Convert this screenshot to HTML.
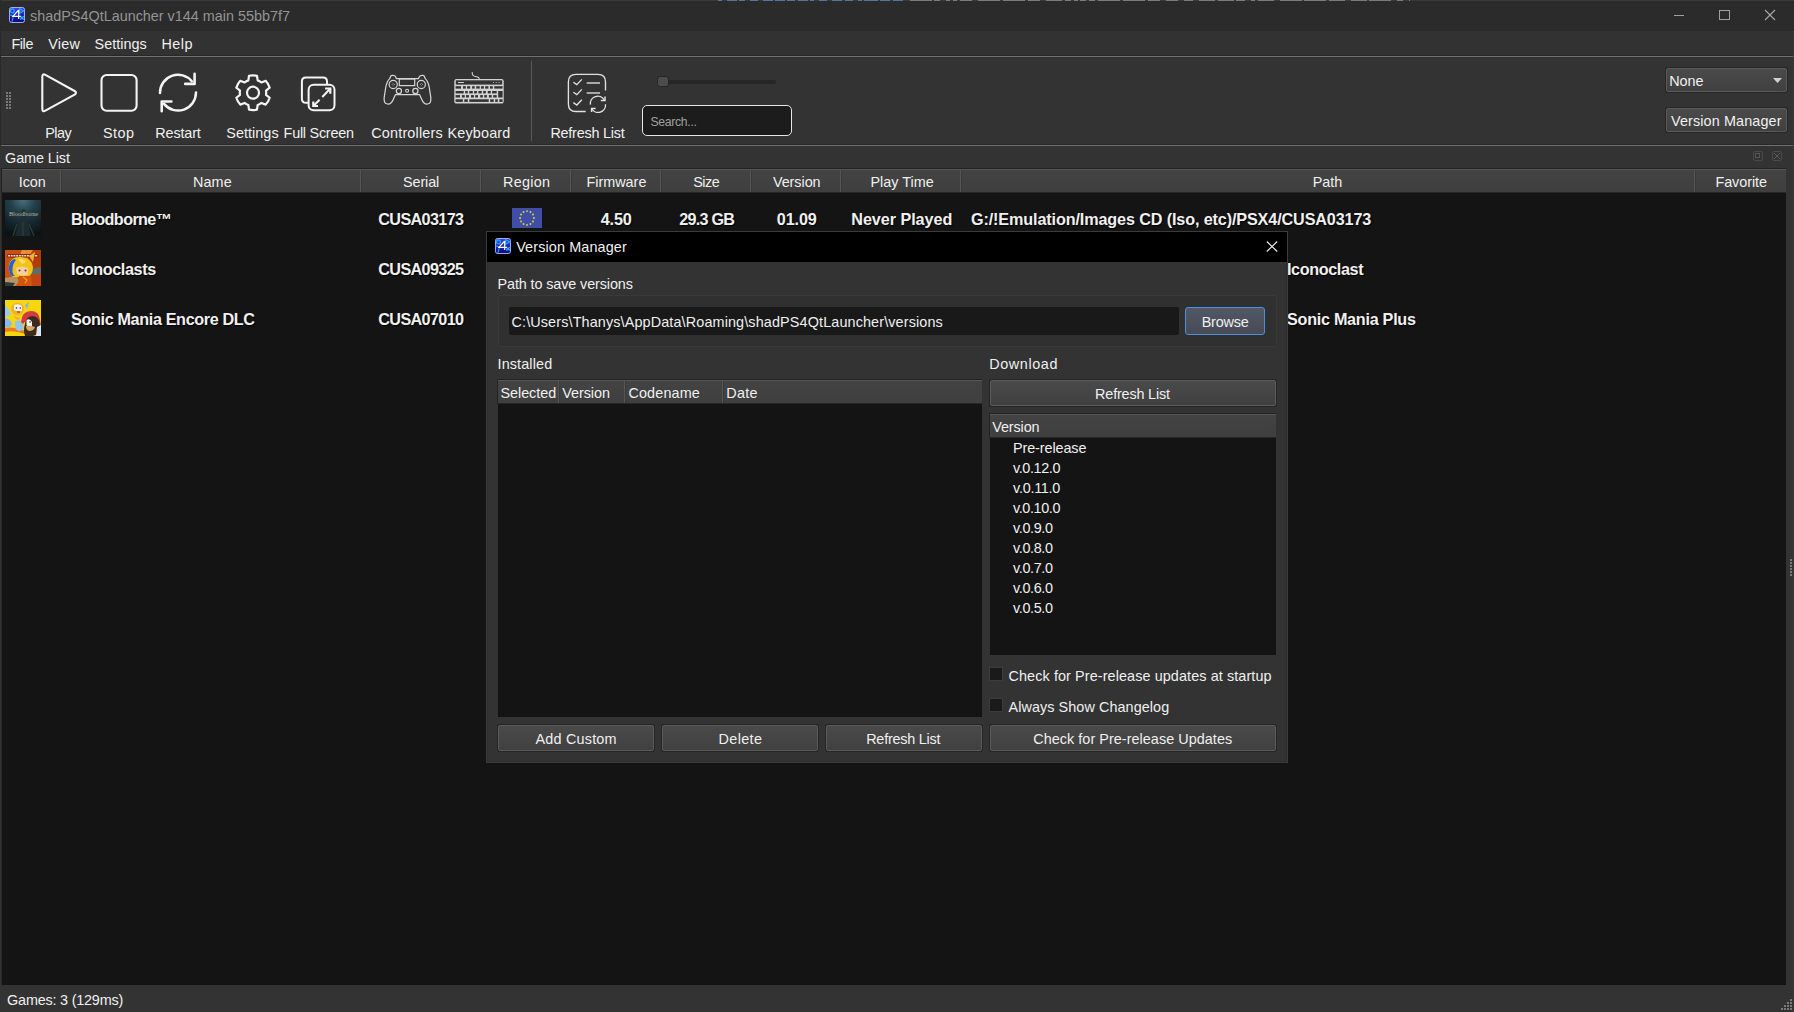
<!DOCTYPE html><html><head><meta charset="utf-8"><style>html,body{margin:0;padding:0;width:1794px;height:1012px;overflow:hidden;background:#333;}body{position:relative;font-family:"Liberation Sans", sans-serif;}.t{position:absolute;white-space:nowrap;line-height:20px;}.b{position:absolute;box-sizing:border-box;}</style></head><body>
<div class="b" style="left:0px;top:0px;width:1794px;height:31px;background:#2b2b2b;"></div>
<div class="b" style="left:0px;top:0px;width:1794px;height:1px;background:#3a3a3a;"></div>
<div class="b" style="left:718px;top:0px;width:4px;height:1px;background:#56749c;"></div>
<div class="b" style="left:727px;top:0px;width:10px;height:1px;background:#56749c;"></div>
<div class="b" style="left:739px;top:0px;width:6px;height:1px;background:#56749c;"></div>
<div class="b" style="left:750px;top:0px;width:8px;height:1px;background:#56749c;"></div>
<div class="b" style="left:763px;top:0px;width:10px;height:1px;background:#56749c;"></div>
<div class="b" style="left:775px;top:0px;width:10px;height:1px;background:#56749c;"></div>
<div class="b" style="left:787px;top:0px;width:8px;height:1px;background:#56749c;"></div>
<div class="b" style="left:798px;top:0px;width:10px;height:1px;background:#56749c;"></div>
<div class="b" style="left:810px;top:0px;width:4px;height:1px;background:#56749c;"></div>
<div class="b" style="left:819px;top:0px;width:8px;height:1px;background:#56749c;"></div>
<div class="b" style="left:832px;top:0px;width:10px;height:1px;background:#56749c;"></div>
<div class="b" style="left:845px;top:0px;width:8px;height:1px;background:#56749c;"></div>
<div class="b" style="left:858px;top:0px;width:4px;height:1px;background:#56749c;"></div>
<div class="b" style="left:864px;top:0px;width:14px;height:1px;background:#56749c;"></div>
<div class="b" style="left:880px;top:0px;width:10px;height:1px;background:#56749c;"></div>
<div class="b" style="left:893px;top:0px;width:10px;height:1px;background:#56749c;"></div>
<div class="b" style="left:910px;top:0px;width:22px;height:1px;background:#7c7c7c;"></div>
<div class="b" style="left:934px;top:0px;width:6px;height:1px;background:#7c7c7c;"></div>
<div class="b" style="left:946px;top:0px;width:4px;height:1px;background:#7c7c7c;"></div>
<div class="b" style="left:953px;top:0px;width:4px;height:1px;background:#7c7c7c;"></div>
<div class="b" style="left:960px;top:0px;width:12px;height:1px;background:#7c7c7c;"></div>
<div class="b" style="left:978px;top:0px;width:22px;height:1px;background:#7c7c7c;"></div>
<div class="b" style="left:1003px;top:0px;width:22px;height:1px;background:#7c7c7c;"></div>
<div class="b" style="left:1028px;top:0px;width:12px;height:1px;background:#7c7c7c;"></div>
<div class="b" style="left:1046px;top:0px;width:16px;height:1px;background:#7c7c7c;"></div>
<div class="b" style="left:1065px;top:0px;width:6px;height:1px;background:#7c7c7c;"></div>
<div class="b" style="left:1074px;top:0px;width:4px;height:1px;background:#7c7c7c;"></div>
<div class="b" style="left:1080px;top:0px;width:6px;height:1px;background:#7c7c7c;"></div>
<div class="b" style="left:1089px;top:0px;width:6px;height:1px;background:#7c7c7c;"></div>
<div class="b" style="left:1098px;top:0px;width:22px;height:1px;background:#7c7c7c;"></div>
<div class="b" style="left:1123px;top:0px;width:22px;height:1px;background:#7c7c7c;"></div>
<div class="b" style="left:1148px;top:0px;width:12px;height:1px;background:#7c7c7c;"></div>
<div class="b" style="left:1166px;top:0px;width:12px;height:1px;background:#7c7c7c;"></div>
<div class="b" style="left:1184px;top:0px;width:9px;height:1px;background:#7c7c7c;"></div>
<div class="b" style="left:1199px;top:0px;width:16px;height:1px;background:#7c7c7c;"></div>
<div class="b" style="left:1218px;top:0px;width:16px;height:1px;background:#7c7c7c;"></div>
<div class="b" style="left:1236px;top:0px;width:9px;height:1px;background:#7c7c7c;"></div>
<div class="b" style="left:1251px;top:0px;width:4px;height:1px;background:#7c7c7c;"></div>
<div class="b" style="left:1258px;top:0px;width:16px;height:1px;background:#7c7c7c;"></div>
<div class="b" style="left:1280px;top:0px;width:22px;height:1px;background:#7c7c7c;"></div>
<div class="b" style="left:1304px;top:0px;width:22px;height:1px;background:#7c7c7c;"></div>
<div class="b" style="left:1329px;top:0px;width:16px;height:1px;background:#7c7c7c;"></div>
<div class="b" style="left:1351px;top:0px;width:16px;height:1px;background:#7c7c7c;"></div>
<div class="b" style="left:1369px;top:0px;width:22px;height:1px;background:#7c7c7c;"></div>
<div class="b" style="left:1397px;top:0px;width:6px;height:1px;background:#7c7c7c;"></div>
<div class="b" style="left:1409px;top:0px;width:1px;height:1px;background:#7c7c7c;"></div>
<svg class="b" style="left:9px;top:7px" width="16" height="16" viewBox="0 0 16 16"><defs><linearGradient id="ag1" x1="0" y1="0" x2="0" y2="1"><stop offset="0" stop-color="#3a48e8"/><stop offset="0.6" stop-color="#1c1ab0"/><stop offset="1" stop-color="#0a0880"/></linearGradient></defs><rect x="0.5" y="0.5" width="15" height="15" rx="2" fill="url(#ag1)" stroke="#b8b8ff" stroke-width="0.9"/><circle cx="3.4" cy="3.9" r="1.9" fill="none" stroke="#22a8f8" stroke-width="1.3"/><path d="M10.6 1.5 L14.8 3.9 L10.6 6.4Z" fill="#3050e0" stroke="#22a8f8" stroke-width="1.1"/><path d="M11.3 9.2 L14.7 12.4 M14.7 9.2 L11.3 12.4" stroke="#18b8ff" stroke-width="1.4"/><path d="M0.6 7.9 L3.5 8.8 Q4.8 9.5 4 11 L2.8 14.8" fill="none" stroke="#20a8e0" stroke-width="1.1"/><path d="M9.7 3 L3.9 9.3 L11.8 9.3 M9.7 3 L9.7 12" fill="none" stroke="#fff" stroke-width="1.15" stroke-linejoin="miter"/></svg>
<div class="t" style="left:30.10px;top:6.01px;font-size:14.4px;color:#949494;letter-spacing:-0.006px;">shadPS4QtLauncher v144 main 55bb7f7</div>
<div class="b" style="left:1674px;top:15px;width:10px;height:1px;background:#a0a0a0;"></div>
<div class="b" style="left:1719px;top:10px;width:11px;height:10px;border:1px solid #a0a0a0;"></div>
<svg class="b" style="left:1764px;top:9px" width="12" height="12" viewBox="0 0 12 12"><path d="M1 1 L11 11 M11 1 L1 11" stroke="#a8a8a8" stroke-width="1.1"/></svg>
<div class="b" style="left:0px;top:31px;width:1794px;height:25px;background:#323232;"></div>
<div class="t" style="left:11.40px;top:34.01px;font-size:14.4px;color:#f0f0f0;letter-spacing:-0.395px;">File</div>
<div class="t" style="left:48.20px;top:34.01px;font-size:14.4px;color:#f0f0f0;letter-spacing:0.232px;">View</div>
<div class="t" style="left:94.50px;top:34.01px;font-size:14.4px;color:#f0f0f0;letter-spacing:0.045px;">Settings</div>
<div class="t" style="left:161.40px;top:34.01px;font-size:14.4px;color:#f0f0f0;letter-spacing:0.512px;">Help</div>
<div class="b" style="left:1px;top:55px;width:1792px;height:1px;background:#282828;"></div>
<div class="b" style="left:1px;top:56px;width:1792px;height:1px;background:#727272;"></div>
<div class="b" style="left:1px;top:57px;width:1792px;height:1px;background:#2e2e2e;"></div>
<div class="b" style="left:6px;top:92px;width:2px;height:2px;background:#7a7a7a;"></div>
<div class="b" style="left:9px;top:92px;width:2px;height:2px;background:#7a7a7a;"></div>
<div class="b" style="left:6px;top:95px;width:2px;height:2px;background:#7a7a7a;"></div>
<div class="b" style="left:9px;top:95px;width:2px;height:2px;background:#7a7a7a;"></div>
<div class="b" style="left:6px;top:98px;width:2px;height:2px;background:#7a7a7a;"></div>
<div class="b" style="left:9px;top:98px;width:2px;height:2px;background:#7a7a7a;"></div>
<div class="b" style="left:6px;top:101px;width:2px;height:2px;background:#7a7a7a;"></div>
<div class="b" style="left:9px;top:101px;width:2px;height:2px;background:#7a7a7a;"></div>
<div class="b" style="left:6px;top:104px;width:2px;height:2px;background:#7a7a7a;"></div>
<div class="b" style="left:9px;top:104px;width:2px;height:2px;background:#7a7a7a;"></div>
<div class="b" style="left:6px;top:107px;width:2px;height:2px;background:#7a7a7a;"></div>
<div class="b" style="left:9px;top:107px;width:2px;height:2px;background:#7a7a7a;"></div>
<svg class="b" style="left:38px;top:70px" width="44" height="46" viewBox="0 0 44 46"><path d="M4.3 6.8 Q4.3 3.2 7.4 4.9 L36.6 21 Q39.4 22.8 36.6 24.6 L7.4 40.7 Q4.3 42.4 4.3 38.8 Z" fill="none" stroke="#f4f4f4" stroke-width="2.1" stroke-linejoin="round"/></svg>
<svg class="b" style="left:98px;top:72px" width="42" height="42" viewBox="0 0 42 42"><rect x="3.5" y="3" width="35.1" height="35.7" rx="5.2" fill="none" stroke="#f4f4f4" stroke-width="2.1"/></svg>
<svg class="b" style="left:155px;top:70px" width="46" height="46" viewBox="0 0 46 46"><path d="M5 23 A18 18 0 0 1 36.8 11.2" fill="none" stroke="#f4f4f4" stroke-width="2.5" stroke-linecap="round"/><path d="M39.6 3.9 L39.6 13.9 L30.2 13.9" fill="none" stroke="#f4f4f4" stroke-width="2.6" stroke-linecap="round" stroke-linejoin="round"/><path d="M41 22.6 A18 18 0 0 1 9 33.9" fill="none" stroke="#f4f4f4" stroke-width="2.5" stroke-linecap="round"/><path d="M6.7 41.2 L6.7 31.5 L16.4 31.5" fill="none" stroke="#f4f4f4" stroke-width="2.6" stroke-linecap="round" stroke-linejoin="round"/></svg>
<svg class="b" style="left:232px;top:72px" width="42" height="42" viewBox="0 0 42 42"><path d="M16.35 8.35 L17.03 3.76 A17.4 17.4 0 0 1 24.97 3.76 L25.65 8.35 A13.2 13.2 0 0 1 29.37 10.50 L33.69 8.79 A17.4 17.4 0 0 1 37.66 15.66 L34.02 18.55 A13.2 13.2 0 0 1 34.02 22.85 L37.66 25.74 A17.4 17.4 0 0 1 33.69 32.61 L29.37 30.90 A13.2 13.2 0 0 1 25.65 33.05 L24.97 37.64 A17.4 17.4 0 0 1 17.03 37.64 L16.35 33.05 A13.2 13.2 0 0 1 12.63 30.90 L8.31 32.61 A17.4 17.4 0 0 1 4.34 25.74 L7.98 22.85 A13.2 13.2 0 0 1 7.98 18.55 L4.34 15.66 A17.4 17.4 0 0 1 8.31 8.79 L12.63 10.50 A13.2 13.2 0 0 1 16.35 8.35 Z" fill="none" stroke="#f4f4f4" stroke-width="2.2" stroke-linejoin="round"/><circle cx="21" cy="20.7" r="6" fill="none" stroke="#f4f4f4" stroke-width="2.2"/></svg>
<svg class="b" style="left:298px;top:74px" width="40" height="40" viewBox="0 0 40 40"><path d="M10.6 28.8 L8 28.8 Q3.9 28.8 3.9 24.7 L3.9 7.4 Q3.9 3.4 8 3.4 L25 3.4 Q29 3.4 29 7.4 L29 10.8" fill="none" stroke="#f4f4f4" stroke-width="2"/><rect x="10.6" y="10.8" width="25.9" height="25.4" rx="5" fill="none" stroke="#f4f4f4" stroke-width="2"/><path d="M15.3 32 L21.6 25.7 M24.3 23 L32.3 14.5" fill="none" stroke="#f4f4f4" stroke-width="2"/><path d="M32.3 19.7 L32.3 14.5 L27.1 14.5 M15.3 27.4 L15.3 32 L20 32" fill="none" stroke="#f4f4f4" stroke-width="2.2"/></svg>
<svg class="b" style="left:380px;top:72px" width="54" height="36" viewBox="0 0 54 36"><path d="M16.3 6.6 L38.4 6.6 L39.5 4.5 Q40 3.3 42 3.3 L43 3.3 Q44.5 3.5 44.8 5.5 L45.2 6.6 Q48 9 49.2 15 L50.8 25.5 Q51.5 31.8 47.5 32 Q44 32.5 42 28 L39.5 22.5 L15.5 22.5 L13 28 Q11 32.5 7.5 32 Q3.5 31.8 4.2 25.5 L5.8 15 Q7 9 9.8 6.6 L10.2 5.5 Q10.5 3.5 12 3.3 L13 3.3 Q15 3.3 15.5 4.5 Z" fill="none" stroke="#d6d6d6" stroke-width="1.25" stroke-linejoin="round"/><rect x="19.3" y="7" width="15.4" height="6.6" fill="none" stroke="#d6d6d6" stroke-width="1.2"/><circle cx="13.2" cy="12.5" r="4.1" fill="none" stroke="#d6d6d6" stroke-width="1.2"/><circle cx="41.3" cy="12.5" r="4.1" fill="none" stroke="#d6d6d6" stroke-width="1.2"/><circle cx="18.9" cy="19" r="2.6" fill="none" stroke="#d6d6d6" stroke-width="1.2"/><circle cx="35.4" cy="19" r="2.6" fill="none" stroke="#d6d6d6" stroke-width="1.2"/><circle cx="27.1" cy="18.8" r="1.5" fill="none" stroke="#d6d6d6" stroke-width="1.1"/><path d="M11.8 12.5 h0.6 M14.2 12.5 h0.6 M13.2 11.2 v0.6 M13.2 13.6 v0.6 M39.9 12.5 h0.6 M42.3 12.5 h0.6 M41.3 11.2 v0.6 M41.3 13.6 v0.6" stroke="#d6d6d6" stroke-width="0.9"/></svg>
<svg class="b" style="left:453px;top:70px" width="52" height="35" viewBox="0 0 52 35"><path d="M19.3 2.1 Q18.8 5.5 21.5 6.2 Q24 6.5 25.5 7.5 Q26.5 8.5 26.1 9.2" fill="none" stroke="#d2d2d2" stroke-width="1.1"/><rect x="1.3" y="9" width="49.4" height="24.6" rx="2.2" fill="#d2d2d2"/><rect x="2.8" y="10.3" width="46.4" height="4.3" fill="#333"/><path d="M5 12.5 H10.9" stroke="#d2d2d2" stroke-width="1"/><circle cx="40.4" cy="12.5" r="0.6" fill="#d2d2d2"/><circle cx="43.2" cy="12.5" r="0.6" fill="#d2d2d2"/><circle cx="46.1" cy="12.5" r="0.6" fill="#d2d2d2"/><rect x="2.6" y="16.2" width="5.4" height="2.4" fill="#333"/><rect x="10.0" y="16.2" width="2.8" height="2.4" fill="#333"/><rect x="14.1" y="16.2" width="3.1" height="2.4" fill="#333"/><rect x="19.1" y="16.2" width="2.6" height="2.4" fill="#333"/><rect x="23.3" y="16.2" width="3.4" height="2.4" fill="#333"/><rect x="28.0" y="16.2" width="2.9" height="2.4" fill="#333"/><rect x="32.2" y="16.2" width="3.2" height="2.4" fill="#333"/><rect x="37.0" y="16.2" width="2.8" height="2.4" fill="#333"/><rect x="41.3" y="16.2" width="8.3" height="2.4" fill="#333"/><rect x="2.6" y="21.0" width="8.1" height="2.4" fill="#333"/><rect x="12.2" y="21.0" width="2.6" height="2.4" fill="#333"/><rect x="16.3" y="21.0" width="3.5" height="2.4" fill="#333"/><rect x="21.1" y="21.0" width="2.8" height="2.4" fill="#333"/><rect x="25.4" y="21.0" width="3.3" height="2.4" fill="#333"/><rect x="30.2" y="21.0" width="2.6" height="2.4" fill="#333"/><rect x="34.8" y="21.0" width="3.0" height="2.4" fill="#333"/><rect x="39.1" y="21.0" width="4.6" height="2.4" fill="#333"/><rect x="2.6" y="25.1" width="4.4" height="2.4" fill="#333"/><rect x="8.9" y="25.1" width="2.8" height="2.4" fill="#333"/><rect x="13.0" y="25.1" width="2.9" height="2.4" fill="#333"/><rect x="18.0" y="25.1" width="2.9" height="2.4" fill="#333"/><rect x="22.2" y="25.1" width="2.8" height="2.4" fill="#333"/><rect x="27.2" y="25.1" width="2.6" height="2.4" fill="#333"/><rect x="31.3" y="25.1" width="2.6" height="2.4" fill="#333"/><rect x="35.9" y="25.1" width="2.8" height="2.4" fill="#333"/><rect x="40.2" y="25.1" width="3.5" height="2.4" fill="#333"/><rect x="2.6" y="29.3" width="7.2" height="2.6" fill="#333"/><rect x="11.3" y="29.3" width="3.5" height="2.6" fill="#333"/><rect x="16.3" y="29.3" width="19.4" height="2.6" fill="#333"/><rect x="37.2" y="29.3" width="3.5" height="2.6" fill="#333"/><rect x="42.2" y="29.3" width="2.6" height="2.6" fill="#333"/><rect x="46.3" y="29.3" width="3.3" height="2.6" fill="#333"/><rect x="45.2" y="21" width="4.4" height="6.5" fill="#333"/></svg>
<div class="b" style="left:531px;top:61px;width:1px;height:80px;background:#5a5a5a;"></div>
<svg class="b" style="left:565px;top:71px" width="44" height="44" viewBox="0 0 44 44"><path d="M20.7 40.5 L10.9 40.5 Q3.4 40.5 3.4 33 L3.4 10.8 Q3.4 3.3 10.9 3.3 L33 3.3 Q40.5 3.3 40.5 10.8 L40.5 19.5" fill="none" stroke="#e2e2e2" stroke-width="1.35"/><path d="M8.4 11.3 L11.8 13.6 L16.8 8.4 M8.4 21.3 L11.8 23.6 L16.8 18.4 M8.4 31.6 L11.8 34 L16.8 28.7" fill="none" stroke="#e2e2e2" stroke-width="1.35"/><path d="M21.7 12.1 H35 M21.7 22 H35" stroke="#a8a8a8" stroke-width="2"/><path d="M25.4 33.6 A7.4 7.4 0 0 1 39.2 29" fill="none" stroke="#e2e2e2" stroke-width="1.35"/><path d="M40 25.4 L40 29.4 L35.8 29.4" fill="none" stroke="#e2e2e2" stroke-width="1.5"/><path d="M40.5 33.3 A7.4 7.4 0 0 1 26.6 37.5" fill="none" stroke="#e2e2e2" stroke-width="1.35"/><path d="M26.6 41 L26.6 37.5 L30.6 37.5" fill="none" stroke="#e2e2e2" stroke-width="1.5"/></svg>
<div class="t" style="left:45.30px;top:122.51px;font-size:14.4px;color:#f0f0f0;letter-spacing:-0.527px;">Play</div>
<div class="t" style="left:103.00px;top:122.51px;font-size:14.4px;color:#f0f0f0;letter-spacing:0.445px;">Stop</div>
<div class="t" style="left:155.30px;top:122.51px;font-size:14.4px;color:#f0f0f0;letter-spacing:-0.135px;">Restart</div>
<div class="t" style="left:226.30px;top:122.51px;font-size:14.4px;color:#f0f0f0;letter-spacing:0.045px;">Settings</div>
<div class="t" style="left:283.60px;top:122.51px;font-size:14.4px;color:#f0f0f0;letter-spacing:-0.246px;">Full Screen</div>
<div class="t" style="left:371.30px;top:122.51px;font-size:14.4px;color:#f0f0f0;letter-spacing:0.175px;">Controllers</div>
<div class="t" style="left:447.40px;top:122.51px;font-size:14.4px;color:#f0f0f0;letter-spacing:0.195px;">Keyboard</div>
<div class="t" style="left:550.40px;top:122.51px;font-size:14.4px;color:#f0f0f0;letter-spacing:-0.227px;">Refresh List</div>
<div class="b" style="left:658px;top:80px;width:118px;height:4px;background:#262626;border-radius:2px;"></div>
<div class="b" style="left:657px;top:76px;width:12px;height:11px;background:#4c4c4c;border:1px solid #262626;border-radius:3px;"></div>
<div class="b" style="left:642px;top:105px;width:150px;height:31px;background:#1c1c1c;border:1.5px solid #e6e6e6;border-radius:5px;"></div>
<div class="t" style="left:650.40px;top:111.77px;font-size:12.2px;color:#a0a0a0;letter-spacing:-0.275px;">Search...</div>
<div class="b" style="left:1665px;top:67px;width:123px;height:26px;background:#262626;border-radius:3px;"></div>
<div class="b" style="left:1666px;top:68px;width:121px;height:24px;background:linear-gradient(#4a4a4a,#404040);border:1px solid #5a5a5a;border-radius:2px;"></div>
<div class="t" style="left:1669.20px;top:71.01px;font-size:14.4px;color:#f0f0f0;">None</div>
<svg class="b" style="left:1773px;top:78px" width="9" height="5" viewBox="0 0 9 5"><path d="M0 0 H9 L4.5 5 Z" fill="#d0d0d0"/></svg>
<div class="b" style="left:1665px;top:107px;width:123px;height:26px;background:#262626;border-radius:3px;"></div>
<div class="b" style="left:1666px;top:108px;width:121px;height:24px;background:linear-gradient(#4a4a4a,#404040);border:1px solid #5a5a5a;border-radius:2px;"></div>
<div class="t" style="left:1671.00px;top:111.01px;font-size:14.4px;color:#f0f0f0;letter-spacing:0.124px;">Version Manager</div>
<div class="b" style="left:1px;top:144px;width:1792px;height:1px;background:#282828;"></div>
<div class="b" style="left:1px;top:145px;width:1792px;height:1px;background:#6e6e6e;"></div>
<div class="t" style="left:5.10px;top:148.01px;font-size:14.4px;color:#f0f0f0;letter-spacing:-0.095px;">Game List</div>
<div class="b" style="left:1753px;top:151px;width:10px;height:10px;border:1px solid #4a4a4a;border-radius:2px;"></div>
<div class="b" style="left:1772px;top:151px;width:10px;height:10px;border:1px solid #4a4a4a;border-radius:2px;"></div>
<svg class="b" style="left:1773px;top:152px" width="8" height="8" viewBox="0 0 8 8"><path d="M1 1 L7 7 M7 1 L1 7" stroke="#5a5a5a" stroke-width="1"/></svg>
<div class="b" style="left:1755px;top:153px;width:5px;height:5px;border:1px solid #555;"></div>
<div class="b" style="left:2px;top:168px;width:1784px;height:817px;background:#141414;"></div>
<div class="b" style="left:1px;top:168px;width:1785px;height:1px;background:#232323;"></div>
<div class="b" style="left:1px;top:168px;width:1px;height:25px;background:#232323;"></div>
<div class="b" style="left:2px;top:169px;width:1784px;height:1px;background:#565656;"></div>
<div class="b" style="left:2px;top:170px;width:1784px;height:22px;background:linear-gradient(#434343,#3f3f3f);"></div>
<div class="b" style="left:2px;top:192px;width:1784px;height:1px;background:#262626;"></div>
<div class="b" style="left:60px;top:169px;width:1px;height:23px;background:#565656;"></div>
<div class="b" style="left:61px;top:170px;width:1px;height:22px;background:#393939;"></div>
<div class="b" style="left:360px;top:169px;width:1px;height:23px;background:#565656;"></div>
<div class="b" style="left:361px;top:170px;width:1px;height:22px;background:#393939;"></div>
<div class="b" style="left:480px;top:169px;width:1px;height:23px;background:#565656;"></div>
<div class="b" style="left:481px;top:170px;width:1px;height:22px;background:#393939;"></div>
<div class="b" style="left:570px;top:169px;width:1px;height:23px;background:#565656;"></div>
<div class="b" style="left:571px;top:170px;width:1px;height:22px;background:#393939;"></div>
<div class="b" style="left:660px;top:169px;width:1px;height:23px;background:#565656;"></div>
<div class="b" style="left:661px;top:170px;width:1px;height:22px;background:#393939;"></div>
<div class="b" style="left:750px;top:169px;width:1px;height:23px;background:#565656;"></div>
<div class="b" style="left:751px;top:170px;width:1px;height:22px;background:#393939;"></div>
<div class="b" style="left:840px;top:169px;width:1px;height:23px;background:#565656;"></div>
<div class="b" style="left:841px;top:170px;width:1px;height:22px;background:#393939;"></div>
<div class="b" style="left:960px;top:169px;width:1px;height:23px;background:#565656;"></div>
<div class="b" style="left:961px;top:170px;width:1px;height:22px;background:#393939;"></div>
<div class="b" style="left:1694px;top:169px;width:1px;height:23px;background:#565656;"></div>
<div class="b" style="left:1695px;top:170px;width:1px;height:22px;background:#393939;"></div>
<div class="t" style="left:18.70px;top:172.01px;font-size:14.4px;color:#f0f0f0;letter-spacing:-0.005px;">Icon</div>
<div class="t" style="left:193.00px;top:172.01px;font-size:14.4px;color:#f0f0f0;letter-spacing:0.084px;">Name</div>
<div class="t" style="left:403.00px;top:172.01px;font-size:14.4px;color:#f0f0f0;letter-spacing:-0.113px;">Serial</div>
<div class="t" style="left:503.10px;top:172.01px;font-size:14.4px;color:#f0f0f0;letter-spacing:0.250px;">Region</div>
<div class="t" style="left:586.40px;top:172.01px;font-size:14.4px;color:#f0f0f0;letter-spacing:0.007px;">Firmware</div>
<div class="t" style="left:693.30px;top:172.01px;font-size:14.4px;color:#f0f0f0;letter-spacing:-0.527px;">Size</div>
<div class="t" style="left:772.90px;top:172.01px;font-size:14.4px;color:#f0f0f0;letter-spacing:-0.049px;">Version</div>
<div class="t" style="left:870.40px;top:172.01px;font-size:14.4px;color:#f0f0f0;letter-spacing:0.035px;">Play Time</div>
<div class="t" style="left:961px;width:733px;text-align:center;top:172.01px;font-size:14.4px;color:#f0f0f0;">Path</div>
<div class="t" style="left:1715.40px;top:172.01px;font-size:14.4px;color:#f0f0f0;letter-spacing:-0.055px;">Favorite</div>
<div class="t" style="left:71.10px;top:208.99px;font-size:16.2px;color:#f0f0f0;font-weight:bold;letter-spacing:-0.618px;text-shadow:1px 1px 1px #000;">Bloodborne™</div>
<div class="t" style="left:378.30px;top:208.99px;font-size:16.2px;color:#f0f0f0;font-weight:bold;letter-spacing:-0.635px;text-shadow:1px 1px 1px #000;">CUSA03173</div>
<div class="t" style="left:71.10px;top:258.99px;font-size:16.2px;color:#f0f0f0;font-weight:bold;letter-spacing:-0.400px;text-shadow:1px 1px 1px #000;">Iconoclasts</div>
<div class="t" style="left:378.30px;top:258.99px;font-size:16.2px;color:#f0f0f0;font-weight:bold;letter-spacing:-0.635px;text-shadow:1px 1px 1px #000;">CUSA09325</div>
<div class="t" style="left:71.10px;top:308.99px;font-size:16.2px;color:#f0f0f0;font-weight:bold;letter-spacing:-0.364px;text-shadow:1px 1px 1px #000;">Sonic Mania Encore DLC</div>
<div class="t" style="left:378.30px;top:308.99px;font-size:16.2px;color:#f0f0f0;font-weight:bold;letter-spacing:-0.635px;text-shadow:1px 1px 1px #000;">CUSA07010</div>
<div class="t" style="left:600.70px;top:208.99px;font-size:16.2px;color:#f0f0f0;font-weight:bold;letter-spacing:-0.130px;text-shadow:1px 1px 1px #000;">4.50</div>
<div class="t" style="left:679.30px;top:208.99px;font-size:16.2px;color:#f0f0f0;font-weight:bold;letter-spacing:-0.777px;text-shadow:1px 1px 1px #000;">29.3 GB</div>
<div class="t" style="left:776.80px;top:208.99px;font-size:16.2px;color:#f0f0f0;font-weight:bold;letter-spacing:-0.125px;text-shadow:1px 1px 1px #000;">01.09</div>
<div class="t" style="left:851.30px;top:208.99px;font-size:16.2px;color:#f0f0f0;font-weight:bold;letter-spacing:-0.058px;text-shadow:1px 1px 1px #000;">Never Played</div>
<div class="t" style="left:971.00px;top:208.99px;font-size:16.2px;color:#f0f0f0;font-weight:bold;letter-spacing:-0.130px;text-shadow:1px 1px 1px #000;">G:/!Emulation/Images CD (Iso, etc)/PSX4/CUSA03173</div>
<div class="t" style="left:1287.00px;top:258.99px;font-size:16.2px;color:#f0f0f0;font-weight:bold;letter-spacing:-0.388px;text-shadow:1px 1px 1px #000;">Iconoclast</div>
<div class="t" style="left:1287.00px;top:308.99px;font-size:16.2px;color:#f0f0f0;font-weight:bold;letter-spacing:-0.278px;text-shadow:1px 1px 1px #000;">Sonic Mania Plus</div>
<svg class="b" style="left:512px;top:208px" width="30" height="20" viewBox="0 0 30 20"><rect width="30" height="20" fill="#3f4ea6"/><circle cx="21.90" cy="10.00" r="0.95" fill="#e8d030"/><circle cx="20.98" cy="13.45" r="0.95" fill="#e8d030"/><circle cx="18.45" cy="15.98" r="0.95" fill="#e8d030"/><circle cx="15.00" cy="16.90" r="0.95" fill="#e8d030"/><circle cx="11.55" cy="15.98" r="0.95" fill="#e8d030"/><circle cx="9.02" cy="13.45" r="0.95" fill="#e8d030"/><circle cx="8.10" cy="10.00" r="0.95" fill="#e8d030"/><circle cx="9.02" cy="6.55" r="0.95" fill="#e8d030"/><circle cx="11.55" cy="4.02" r="0.95" fill="#e8d030"/><circle cx="15.00" cy="3.10" r="0.95" fill="#e8d030"/><circle cx="18.45" cy="4.02" r="0.95" fill="#e8d030"/><circle cx="20.98" cy="6.55" r="0.95" fill="#e8d030"/></svg>
<svg class="b" style="left:5px;top:200px" width="36" height="36" viewBox="0 0 36 36"><defs><radialGradient id="bb" cx="0.5" cy="0" r="1"><stop offset="0" stop-color="#4a6e7c"/><stop offset="0.35" stop-color="#23404a"/><stop offset="0.75" stop-color="#132228"/><stop offset="1" stop-color="#0b1316"/></radialGradient></defs><rect width="36" height="36" fill="url(#bb)"/><path d="M17 9 L19.5 9 L22 20 L26 36 L10 36 L15 20 Z" fill="#1e3034" opacity="0.8"/><path d="M12 24 L8 36 M24 24 L29 36 M18 22 L18 36" stroke="#2c3e3c" stroke-width="1.2"/><text x="18.5" y="16.3" font-family="Liberation Serif" font-size="6.6" fill="#bdb59a" text-anchor="middle" textLength="29" lengthAdjust="spacingAndGlyphs">Bloodborne</text></svg>
<svg class="b" style="left:5px;top:250px" width="36" height="36" viewBox="0 0 36 36"><rect width="36" height="36" fill="#c9500f"/><path d="M20 0 L36 0 L36 18 L28 20 Z" fill="#b53c08"/><path d="M17 0 L28 0 L22 10 L14 8Z" fill="#f0a040" opacity="0.8"/><path d="M0 28 L12 26 L14 32 L10 36 L0 36Z" fill="#b49466"/><path d="M0 32 L10 33 L8 36 L0 36Z" fill="#2f3a3a"/><path d="M23 19 L36 17 L36 24 L26 26Z" fill="#5f6c66"/><path d="M22 25 L36 24 L36 36 L22 36Z" fill="#c24410"/><rect x="2.3" y="4" width="31" height="3.6" fill="#8a2a14"/><path d="M3 5.8 H33" stroke="#f2d8c8" stroke-width="1.6" stroke-dasharray="2 0.7"/><path d="M4 15 Q6 6 16 7 Q27 8 28 17 Q28 25 22 27 L8 27 Q3 23 4 15Z" fill="#f2c414"/><path d="M13 9 Q18 8 21 12 L17 14Z" fill="#f8e070"/><path d="M24 6 L30 2 L28 12Z" fill="#f0b030"/><path d="M4 20 Q3 12 9 9 L11 10 Q7 14 7.5 22 Q8 25 10 26 L7 26 Q4.5 24 4 20Z" fill="#2060e0"/><path d="M11 18 Q17 15 23 18 L23 24 Q18 27 12 24Z" fill="#f2d0a4"/><circle cx="14.5" cy="20.5" r="1" fill="#a02020"/><circle cx="20.5" cy="20.5" r="1" fill="#a02020"/><path d="M14 26 L26 26 L27 36 L13 36Z" fill="#d4540e"/><path d="M18 27 L22 30 L20 33" stroke="#f0a020" stroke-width="1.2" fill="none"/></svg>
<svg class="b" style="left:5px;top:300px" width="36" height="36" viewBox="0 0 36 36"><rect width="36" height="36" fill="#f7d60e"/><path d="M0 28 Q10 26 20 31 L20 34 Q10 30 0 32Z" fill="#f07a20"/><path d="M0 6 Q4 8 6 14 L2 17 L0 16Z" fill="#9cc8f0"/><path d="M0 18 Q6 19 7 24 L4 28 L0 27Z" fill="#8ab8ee"/><path d="M10 21 Q16 19 18 24 Q20 30 15 31 Q11 31 10 27Z" fill="#94c4f2"/><path d="M20 5 L24 2 L22 9 Z" fill="#80b0e8"/><circle cx="12.5" cy="9" r="6.5" fill="#f0b428"/><path d="M9 5 Q13 3 17 6 L17 11 Q13 12 9 10Z" fill="#f8f4ec"/><circle cx="11.5" cy="8" r="0.8" fill="#222"/><circle cx="15.3" cy="8" r="0.8" fill="#222"/><path d="M12 12 H15" stroke="#a02020" stroke-width="1.1"/><path d="M9 15 Q12 19 15 17 L14 20 Q10 20 9 15Z" fill="#e8a850"/><path d="M16 22 Q17 11 26 11 Q34 11 35 20 L36 26 L30 24 Q24 16 18 24Z" fill="#d23a44"/><path d="M20 24 Q21 16 28 16 Q35 17 35 26 Q35 34 28 36 L20 36 Q18 30 20 24Z" fill="#3c2a1e"/><path d="M21.5 20 Q25 18 27 22 L27 27 Q23 28 21.5 25Z" fill="#f6f2ea"/><circle cx="25" cy="22" r="0.8" fill="#222"/><path d="M21 26 Q25 25 30 27 Q29 31 24 31 Q21 30 21 26Z" fill="#d8a868"/><path d="M32 27 L36 25 L36 36 L31 36Z" fill="#dce8f8"/></svg>
<div class="b" style="left:1790px;top:559px;width:2px;height:2px;background:#7a7a7a;"></div>
<div class="b" style="left:1790px;top:562px;width:2px;height:2px;background:#7a7a7a;"></div>
<div class="b" style="left:1790px;top:565px;width:2px;height:2px;background:#7a7a7a;"></div>
<div class="b" style="left:1790px;top:568px;width:2px;height:2px;background:#7a7a7a;"></div>
<div class="b" style="left:1790px;top:571px;width:2px;height:2px;background:#7a7a7a;"></div>
<div class="b" style="left:1790px;top:574px;width:2px;height:2px;background:#7a7a7a;"></div>
<div class="b" style="left:0px;top:985px;width:1794px;height:27px;background:#333;"></div>
<div class="t" style="left:7.10px;top:990.01px;font-size:14.4px;color:#f0f0f0;letter-spacing:-0.202px;">Games: 3 (129ms)</div>
<div class="b" style="left:1790px;top:999px;width:2px;height:2px;background:#7a7a7a;"></div>
<div class="b" style="left:1787px;top:1002px;width:2px;height:2px;background:#7a7a7a;"></div>
<div class="b" style="left:1790px;top:1002px;width:2px;height:2px;background:#7a7a7a;"></div>
<div class="b" style="left:1784px;top:1005px;width:2px;height:2px;background:#7a7a7a;"></div>
<div class="b" style="left:1787px;top:1005px;width:2px;height:2px;background:#7a7a7a;"></div>
<div class="b" style="left:1790px;top:1005px;width:2px;height:2px;background:#7a7a7a;"></div>
<div class="b" style="left:1781px;top:1008px;width:2px;height:2px;background:#7a7a7a;"></div>
<div class="b" style="left:1784px;top:1008px;width:2px;height:2px;background:#7a7a7a;"></div>
<div class="b" style="left:1787px;top:1008px;width:2px;height:2px;background:#7a7a7a;"></div>
<div class="b" style="left:1790px;top:1008px;width:2px;height:2px;background:#7a7a7a;"></div>
<div class="b" style="left:0px;top:0px;width:1px;height:146px;background:#2a2a2a;"></div>
<div class="b" style="left:0px;top:146px;width:1px;height:866px;background:#333;"></div>
<div class="b" style="left:1px;top:193px;width:1px;height:792px;background:#2a2a2a;"></div>
<div class="b" style="left:1793px;top:31px;width:1px;height:981px;background:#3a3a3a;"></div>
<div class="b" style="left:486px;top:231px;width:802px;height:532px;background:#333;border:1px solid #3b3b3b;"></div>
<div class="b" style="left:487px;top:262px;width:800px;height:500px;border:1px solid #2e2e2e;border-top:none;"></div>
<div class="b" style="left:487px;top:232px;width:800px;height:30px;background:#000;"></div>
<svg class="b" style="left:495px;top:238px" width="16" height="16" viewBox="0 0 16 16"><defs><linearGradient id="ag2" x1="0" y1="0" x2="0" y2="1"><stop offset="0" stop-color="#3a48e8"/><stop offset="0.6" stop-color="#1c1ab0"/><stop offset="1" stop-color="#0a0880"/></linearGradient></defs><rect x="0.5" y="0.5" width="15" height="15" rx="2" fill="url(#ag2)" stroke="#b8b8ff" stroke-width="0.9"/><circle cx="3.4" cy="3.9" r="1.9" fill="none" stroke="#22a8f8" stroke-width="1.3"/><path d="M10.6 1.5 L14.8 3.9 L10.6 6.4Z" fill="#3050e0" stroke="#22a8f8" stroke-width="1.1"/><path d="M11.3 9.2 L14.7 12.4 M14.7 9.2 L11.3 12.4" stroke="#18b8ff" stroke-width="1.4"/><path d="M0.6 7.9 L3.5 8.8 Q4.8 9.5 4 11 L2.8 14.8" fill="none" stroke="#20a8e0" stroke-width="1.1"/><path d="M9.7 3 L3.9 9.3 L11.8 9.3 M9.7 3 L9.7 12" fill="none" stroke="#fff" stroke-width="1.15" stroke-linejoin="miter"/></svg>
<div class="t" style="left:516.20px;top:237.01px;font-size:14.4px;color:#f0f0f0;letter-spacing:0.124px;">Version Manager</div>
<svg class="b" style="left:1266px;top:241px" width="12" height="11" viewBox="0 0 12 11"><path d="M0.8 0.5 L11.2 10.5 M11.2 0.5 L0.8 10.5" stroke="#f0f0f0" stroke-width="1.1"/></svg>
<div class="t" style="left:497.50px;top:273.51px;font-size:14.4px;color:#f0f0f0;letter-spacing:-0.108px;">Path to save versions</div>
<div class="b" style="left:498px;top:295px;width:779px;height:52px;background:#303030;border:1px solid #393939;border-radius:2px;"></div>
<div class="b" style="left:509px;top:307px;width:670px;height:28px;background:#191919;border-radius:2px;"></div>
<div class="t" style="left:511.50px;top:312.01px;font-size:14.4px;color:#f0f0f0;letter-spacing:0.129px;">C:\Users\Thanys\AppData\Roaming\shadPS4QtLauncher\versions</div>
<div class="b" style="left:1185px;top:307px;width:80px;height:28px;background:linear-gradient(#525866,#464b57);border:1px solid #4a90dc;border-radius:3px;"></div>
<div class="t" style="left:1201.70px;top:312.01px;font-size:14.4px;color:#f0f0f0;letter-spacing:-0.190px;">Browse</div>
<div class="t" style="left:497.50px;top:354.01px;font-size:14.4px;color:#f0f0f0;letter-spacing:0.129px;">Installed</div>
<div class="b" style="left:498px;top:380px;width:484px;height:337px;background:#141414;"></div>
<div class="b" style="left:497px;top:379px;width:485px;height:1px;background:#232323;"></div>
<div class="b" style="left:497px;top:379px;width:1px;height:25px;background:#232323;"></div>
<div class="b" style="left:498px;top:380px;width:484px;height:1px;background:#565656;"></div>
<div class="b" style="left:498px;top:381px;width:484px;height:22px;background:linear-gradient(#434343,#3f3f3f);"></div>
<div class="b" style="left:498px;top:403px;width:484px;height:1px;background:#262626;"></div>
<div class="b" style="left:558px;top:380px;width:1px;height:23px;background:#565656;"></div>
<div class="b" style="left:559px;top:381px;width:1px;height:22px;background:#393939;"></div>
<div class="b" style="left:624px;top:380px;width:1px;height:23px;background:#565656;"></div>
<div class="b" style="left:625px;top:381px;width:1px;height:22px;background:#393939;"></div>
<div class="b" style="left:722px;top:380px;width:1px;height:23px;background:#565656;"></div>
<div class="b" style="left:723px;top:381px;width:1px;height:22px;background:#393939;"></div>
<div class="t" style="left:500.40px;top:382.61px;font-size:14.4px;color:#f0f0f0;letter-spacing:-0.017px;">Selected</div>
<div class="t" style="left:562.30px;top:382.61px;font-size:14.4px;color:#f0f0f0;letter-spacing:-0.066px;">Version</div>
<div class="t" style="left:628.40px;top:382.61px;font-size:14.4px;color:#f0f0f0;letter-spacing:0.155px;">Codename</div>
<div class="t" style="left:726.30px;top:382.61px;font-size:14.4px;color:#f0f0f0;letter-spacing:0.272px;">Date</div>
<div class="t" style="left:989.30px;top:354.01px;font-size:14.4px;color:#f0f0f0;letter-spacing:0.589px;">Download</div>
<div class="b" style="left:989px;top:379px;width:288px;height:28px;background:#262626;border-radius:3px;"></div>
<div class="b" style="left:990px;top:380px;width:286px;height:26px;background:linear-gradient(#4a4a4a,#404040);border:1px solid #5a5a5a;border-radius:2px;"></div>
<div class="t" style="left:1095.10px;top:384.01px;font-size:14.4px;color:#f0f0f0;letter-spacing:-0.172px;">Refresh List</div>
<div class="b" style="left:990px;top:414px;width:286px;height:241px;background:#141414;"></div>
<div class="b" style="left:989px;top:413px;width:287px;height:1px;background:#232323;"></div>
<div class="b" style="left:989px;top:413px;width:1px;height:25px;background:#232323;"></div>
<div class="b" style="left:990px;top:414px;width:286px;height:1px;background:#565656;"></div>
<div class="b" style="left:990px;top:415px;width:286px;height:22px;background:linear-gradient(#434343,#3f3f3f);"></div>
<div class="b" style="left:990px;top:437px;width:286px;height:1px;background:#262626;"></div>
<div class="t" style="left:992.20px;top:417.01px;font-size:14.4px;color:#f0f0f0;letter-spacing:-0.099px;">Version</div>
<div class="t" style="left:1013.00px;top:438.01px;font-size:14.4px;color:#f0f0f0;letter-spacing:-0.095px;">Pre-release</div>
<div class="t" style="left:1013.00px;top:458.01px;font-size:14.4px;color:#f0f0f0;letter-spacing:-0.387px;">v.0.12.0</div>
<div class="t" style="left:1013.00px;top:478.01px;font-size:14.4px;color:#f0f0f0;letter-spacing:-0.243px;">v.0.11.0</div>
<div class="t" style="left:1013.00px;top:498.01px;font-size:14.4px;color:#f0f0f0;letter-spacing:-0.387px;">v.0.10.0</div>
<div class="t" style="left:1013.00px;top:518.01px;font-size:14.4px;color:#f0f0f0;letter-spacing:-0.365px;">v.0.9.0</div>
<div class="t" style="left:1013.00px;top:538.01px;font-size:14.4px;color:#f0f0f0;letter-spacing:-0.365px;">v.0.8.0</div>
<div class="t" style="left:1013.00px;top:558.01px;font-size:14.4px;color:#f0f0f0;letter-spacing:-0.365px;">v.0.7.0</div>
<div class="t" style="left:1013.00px;top:578.01px;font-size:14.4px;color:#f0f0f0;letter-spacing:-0.365px;">v.0.6.0</div>
<div class="t" style="left:1013.00px;top:598.01px;font-size:14.4px;color:#f0f0f0;letter-spacing:-0.365px;">v.0.5.0</div>
<div class="b" style="left:989px;top:667px;width:14px;height:14px;background:#1a1a1a;border:1px solid #3c3c3c;"></div>
<div class="t" style="left:1008.50px;top:666.01px;font-size:14.4px;color:#f0f0f0;letter-spacing:0.099px;">Check for Pre-release updates at startup</div>
<div class="b" style="left:989px;top:698px;width:14px;height:14px;background:#1a1a1a;border:1px solid #3c3c3c;"></div>
<div class="t" style="left:1008.50px;top:697.01px;font-size:14.4px;color:#f0f0f0;letter-spacing:0.072px;">Always Show Changelog</div>
<div class="b" style="left:497px;top:724px;width:158px;height:28px;background:#262626;border-radius:3px;"></div>
<div class="b" style="left:498px;top:725px;width:156px;height:26px;background:linear-gradient(#4a4a4a,#404040);border:1px solid #5a5a5a;border-radius:2px;"></div>
<div class="t" style="left:535.40px;top:729.01px;font-size:14.4px;color:#f0f0f0;letter-spacing:0.222px;">Add Custom</div>
<div class="b" style="left:661px;top:724px;width:158px;height:28px;background:#262626;border-radius:3px;"></div>
<div class="b" style="left:662px;top:725px;width:156px;height:26px;background:linear-gradient(#4a4a4a,#404040);border:1px solid #5a5a5a;border-radius:2px;"></div>
<div class="t" style="left:718.60px;top:729.01px;font-size:14.4px;color:#f0f0f0;letter-spacing:0.357px;">Delete</div>
<div class="b" style="left:825px;top:724px;width:158px;height:28px;background:#262626;border-radius:3px;"></div>
<div class="b" style="left:826px;top:725px;width:156px;height:26px;background:linear-gradient(#4a4a4a,#404040);border:1px solid #5a5a5a;border-radius:2px;"></div>
<div class="t" style="left:866.20px;top:729.01px;font-size:14.4px;color:#f0f0f0;letter-spacing:-0.218px;">Refresh List</div>
<div class="b" style="left:989px;top:724px;width:288px;height:28px;background:#262626;border-radius:3px;"></div>
<div class="b" style="left:990px;top:725px;width:286px;height:26px;background:linear-gradient(#4a4a4a,#404040);border:1px solid #5a5a5a;border-radius:2px;"></div>
<div class="t" style="left:1033.20px;top:729.01px;font-size:14.4px;color:#f0f0f0;letter-spacing:0.050px;">Check for Pre-release Updates</div>
</body></html>
